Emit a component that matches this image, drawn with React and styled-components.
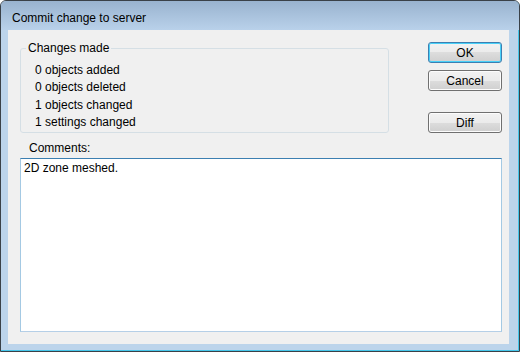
import React from 'react';
import styled, { createGlobalStyle } from 'styled-components';

const GlobalStyle = createGlobalStyle`
  html, body {
    margin: 0;
    padding: 0;
    background: #ffffff;
  }
  body {
    font-family: "Liberation Sans", Arial, sans-serif;
    font-size: 12px;
    color: #000;
  }
`;

const Window = styled.div`
  width: 520px;
  height: 352px;
  box-sizing: border-box;
  border: 1px solid #3a4148;
  border-radius: 6px 6px 0 0;
  background: #bcd4eb;
  box-shadow: inset -1px -1px 0 #45c6ea;
  display: flex;
  flex-direction: column;
  overflow: hidden;
`;

const TitleBar = styled.div`
  height: 29px;
  flex-shrink: 0;
  box-sizing: border-box;
  padding: 10px 0 0 11px;
  line-height: 15px;
  background: linear-gradient(#99b3cf, #b9d1ea);
`;

const Frame = styled.div`
  flex: 1;
  display: flex;
  padding: 0 10px 7px 7px;
`;

const Client = styled.div`
  flex: 1;
  display: flex;
  flex-direction: column;
  background: #f0f0f0;
  padding: 12px 7px 12px 12px;
`;

const TopRow = styled.div`
  display: flex;
  justify-content: space-between;
`;

const GroupBox = styled.div`
  position: relative;
  width: 369px;
  height: 85px;
  margin-top: 6px;
  box-sizing: border-box;
  border: 1px solid #d5dfe5;
  border-radius: 3px;
  padding: 13px 0 0 14px;
`;

const Legend = styled.span`
  position: absolute;
  top: -8px;
  left: 5px;
  padding: 0 2px;
  line-height: 15px;
  background: #f0f0f0;
`;

const Line = styled.div`
  line-height: 17.3px;
`;

const Buttons = styled.div`
  display: flex;
  flex-direction: column;
  gap: 7px;
`;

const Button = styled.button`
  width: 74px;
  height: 21px;
  margin-top: ${(p) => p.$gap || 0}px;
  padding: 0;
  font-family: inherit;
  font-size: 12px;
  color: #000;
  border: 1px solid ${(p) => (p.$default ? '#3c7fb1' : '#707070')};
  border-radius: 3px;
  background: linear-gradient(#f2f2f2 0%, #ebebeb 50%, #dddddd 50%, #cfcfcf 100%);
  box-shadow: inset 0 0 0 1px ${(p) => (p.$default ? '#48d0f8' : '#fcfcfc')};
`;

const Label = styled.div`
  margin: 7px 0 2px 9px;
  line-height: 16px;
`;

const Comments = styled.div`
  flex: 1;
  background: #fff;
  border: 1px solid;
  border-color: #3c7fb1 #a4c9e3 #b5cfe7 #a4c9e3;
  padding: 2px 3px;
  line-height: 15px;
`;

const changes = [
  '0 objects added',
  '0 objects deleted',
  '1 objects changed',
  '1 settings changed',
];

const App = () => (
  <>
    <GlobalStyle />
    <Window>
      <TitleBar>Commit change to server</TitleBar>
      <Frame>
        <Client>
          <TopRow>
            <GroupBox>
              <Legend>Changes made</Legend>
              {changes.map((c) => (
                <Line key={c}>{c}</Line>
              ))}
            </GroupBox>
            <Buttons>
              <Button $default>OK</Button>
              <Button>Cancel</Button>
              <Button $gap={14}>Diff</Button>
            </Buttons>
          </TopRow>
          <Label>Comments:</Label>
          <Comments>2D zone meshed.</Comments>
        </Client>
      </Frame>
    </Window>
  </>
);

export default App;
